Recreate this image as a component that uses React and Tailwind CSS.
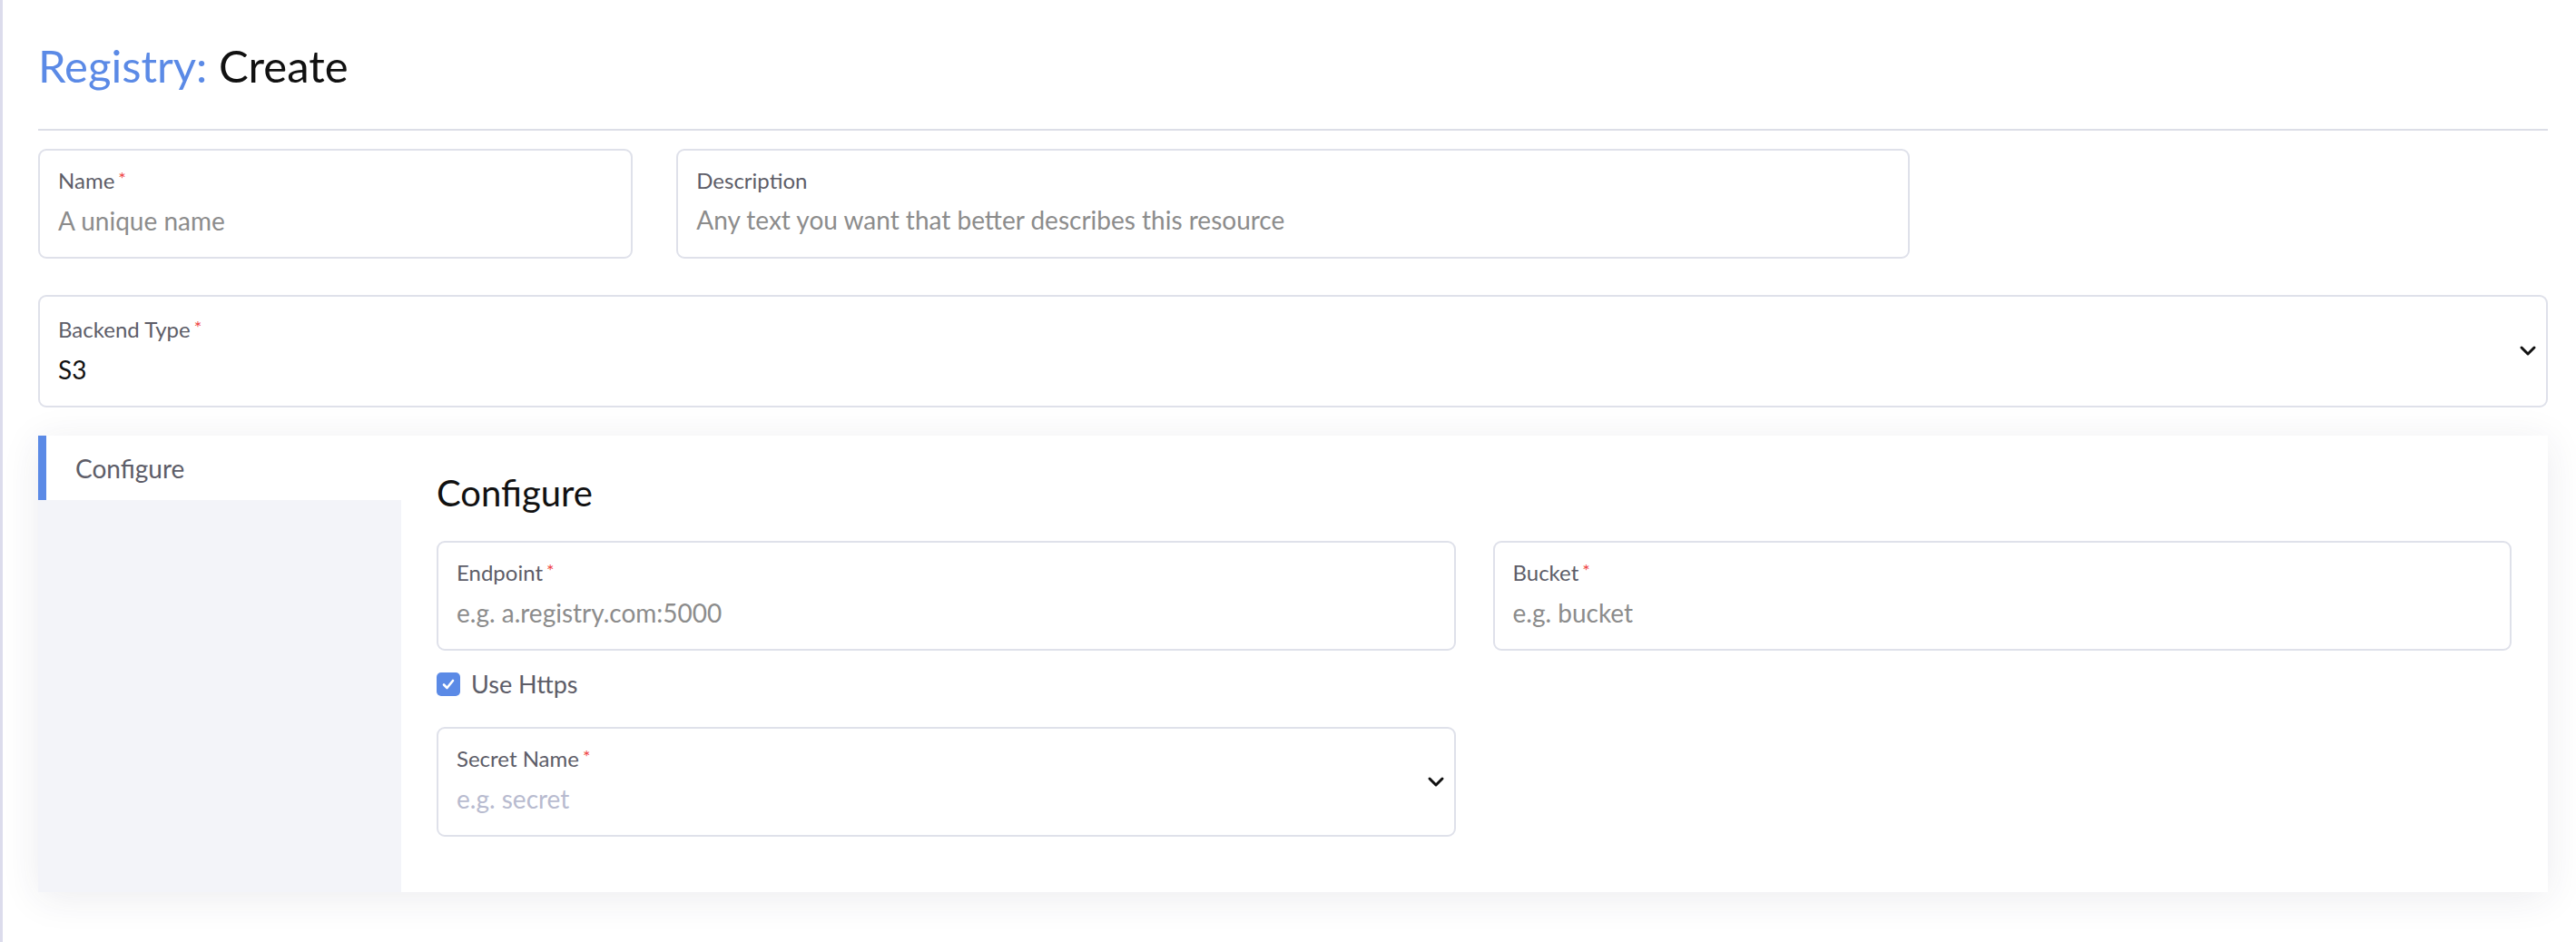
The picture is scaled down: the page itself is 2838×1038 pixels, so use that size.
import React from "react";

const font = { fontFamily: "Lato, 'Open Sans', sans-serif" };

function Chevron() {
  return (
    <svg width="20" height="14" viewBox="0 0 20 14" fill="none">
      <polyline points="3,3 10,10 17,3" stroke="#111" strokeWidth="3" strokeLinecap="round" strokeLinejoin="round" />
    </svg>
  );
}

function Field({ label, required, placeholder, value, placeholderClass = "text-[#8c8c8c]", chevron, className = "" }) {
  return (
    <div className={"relative border-2 border-[#dfe1ea] rounded-[9px] bg-white pt-[18px] pb-[22px] px-[20px] " + className}>
      <div className="text-[24px] leading-[30px] text-[#5d5d68] mb-[10px]">
        {label}
        {required && <span className="text-[#ef4444] ml-[4px] text-[20px] relative top-[-4px]">*</span>}
      </div>
      {value ? (
        <div className="text-[28px] leading-[36px] text-[#111]">{value}</div>
      ) : (
        <div className={"text-[28px] leading-[36px] " + placeholderClass}>{placeholder}</div>
      )}
      {chevron && (
        <div className="absolute right-[10px] top-0 bottom-0 flex items-center">
          <Chevron />
        </div>
      )}
    </div>
  );
}

export default function App() {
  return (
    <div style={font} className="min-h-[1038px] bg-white border-l-[3px] border-[#dcdcec] pl-[39px] pr-[31px]">
      <div className="pt-[43px] text-[49px] leading-[58px]">
        <span className="text-[#5b8ae6]">Registry:</span> <span className="text-[#111]">Create</span>
      </div>
      <div className="mt-[41px] h-[2px] bg-[#dcdee7]" />

      <div className="mt-[20px] grid grid-cols-12 gap-x-[48px]">
        <Field className="col-span-3" label="Name" required placeholder="A unique name" />
        <Field className="col-span-6" label="Description" placeholder="Any text you want that better describes this resource" />
      </div>

      <Field className="mt-[40px] pt-[21px] pb-[15px]" label="Backend Type" required value="S3" chevron />

      <div className="mt-[31px] flex bg-white shadow-[0_6px_40px_rgba(40,40,80,0.09)]">
        <div className="w-[400px] shrink-0 bg-[#f3f4f9]">
          <div className="h-[71px] bg-white border-l-[9px] border-[#5b8ae6] pl-[32px] flex items-center text-[28px] text-[#5d5d68]">
            Configure
          </div>
        </div>
        <div className="flex-1 pt-[39px] pl-[39px] pr-[40px] pb-[61px]">
          <div className="text-[40px] leading-[48px] text-[#111]">Configure</div>
          <div className="mt-[29px] grid grid-cols-2 gap-x-[41px]">
            <div>
              <Field label="Endpoint" required placeholder="e.g. a.registry.com:5000" />
              <div className="mt-[22px] h-[30px] flex items-center gap-[12px]">
                <div className="w-[26px] h-[26px] rounded-[5px] bg-[#5b8ae6] flex items-center justify-center">
                  <svg width="18" height="18" viewBox="0 0 18 18" fill="none">
                    <polyline points="4,9.5 7.5,13 14,5" stroke="#fff" strokeWidth="2.6" strokeLinecap="round" strokeLinejoin="round" />
                  </svg>
                </div>
                <span className="text-[27px] text-[#5d5d68]">Use Https</span>
              </div>
              <Field className="mt-[32px]" label="Secret Name" required placeholder="e.g. secret" placeholderClass="text-[#b8bbcf]" chevron />
            </div>
            <div>
              <Field label="Bucket" required placeholder="e.g. bucket" />
            </div>
          </div>
        </div>
      </div>
    </div>
  );
}
